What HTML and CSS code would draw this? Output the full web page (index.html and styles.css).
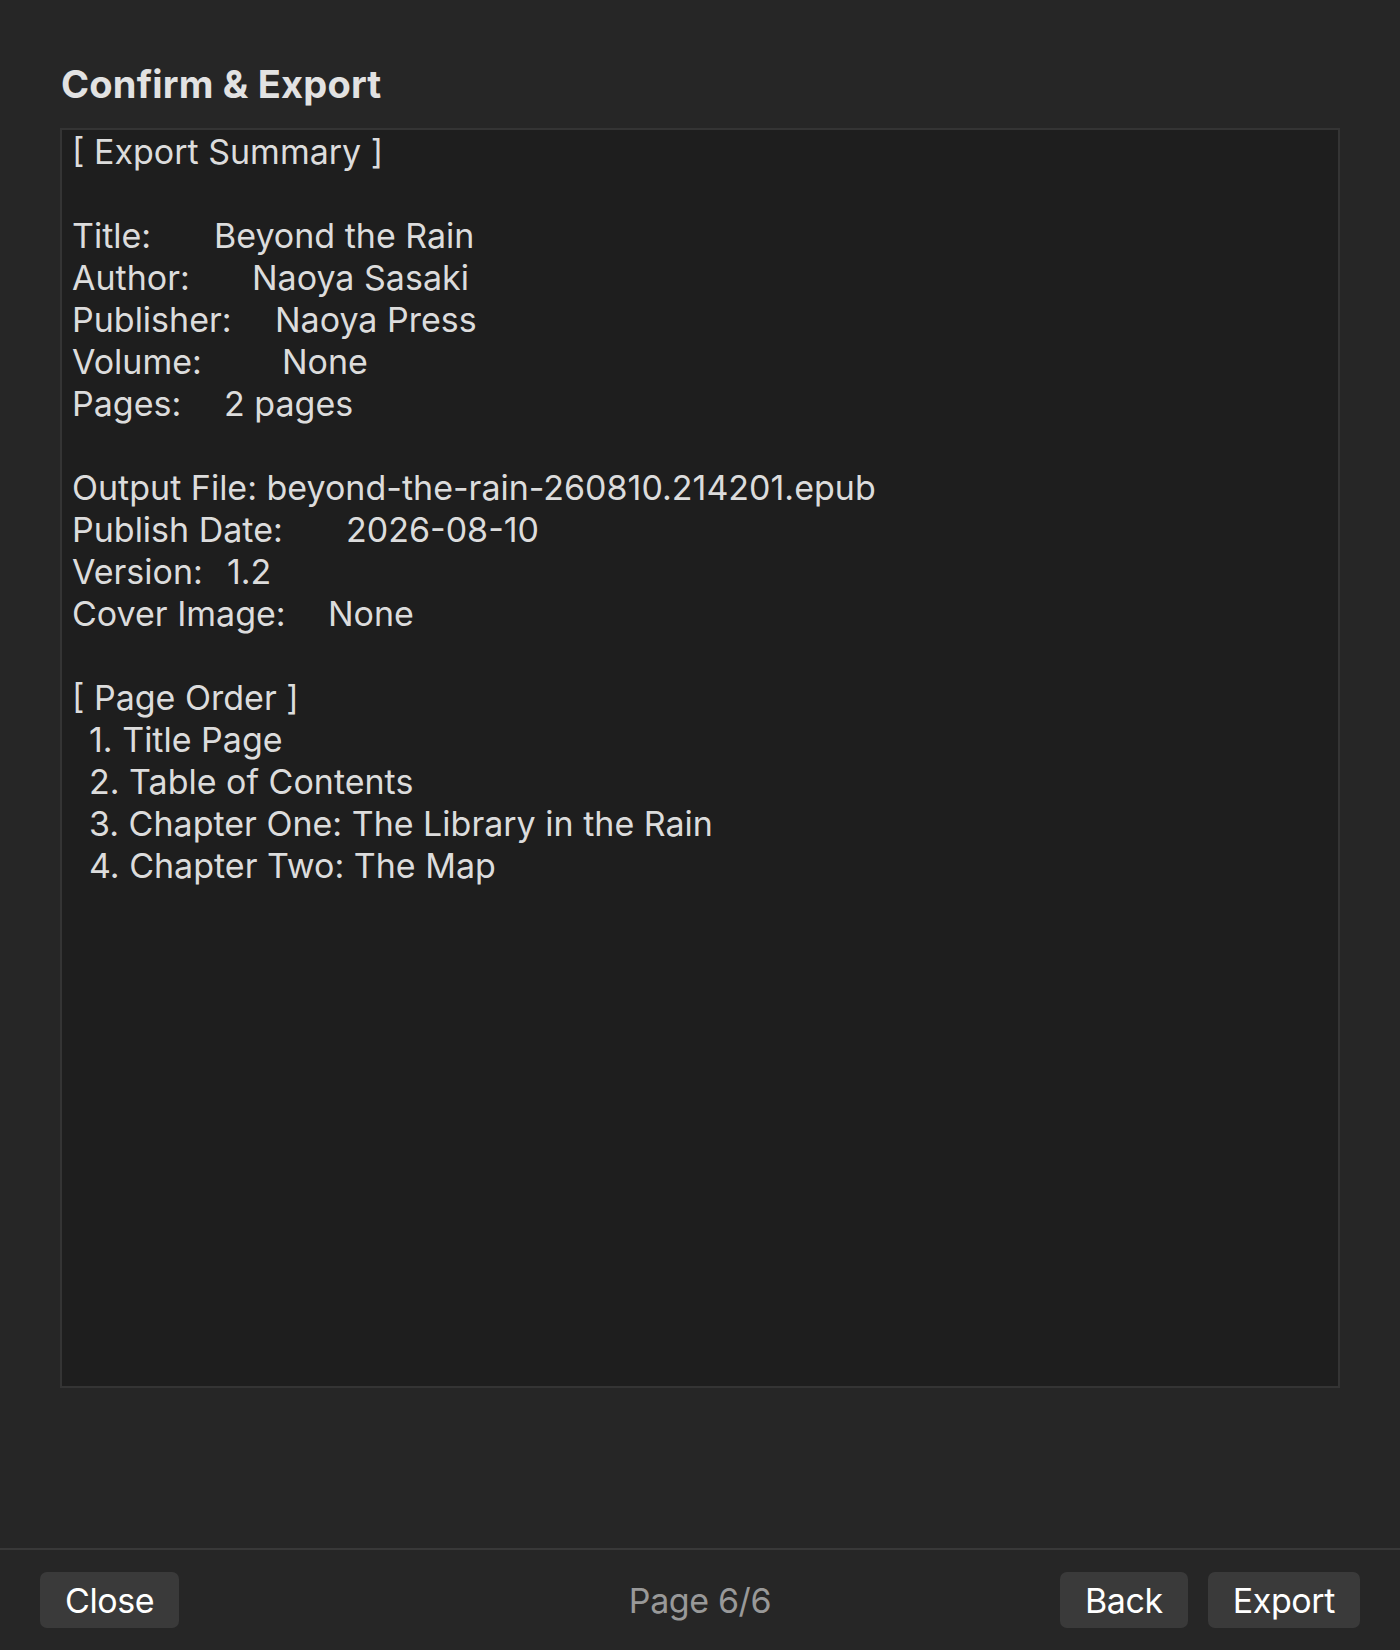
FILE: index.html
```html
<!DOCTYPE html>
<html lang="en">
<head>
<meta charset="utf-8">
<title>Confirm &amp; Export</title>
<link rel="stylesheet" href="styles.css">
</head>
<body>
<div class="page">
  <main class="content">
    <h1 class="heading">Confirm &amp; Export</h1>
    <div class="summary">
      <div class="line">[ Export Summary ]</div>
      <div class="line blank"></div>
      <div class="line"><span class="lbl w-title">Title:</span>Beyond the Rain</div>
      <div class="line"><span class="lbl w-author">Author:</span>Naoya Sasaki</div>
      <div class="line"><span class="lbl w-publisher">Publisher:</span>Naoya Press</div>
      <div class="line"><span class="lbl w-volume">Volume:</span>None</div>
      <div class="line"><span class="lbl w-pages">Pages:</span>2 pages</div>
      <div class="line blank"></div>
      <div class="line">Output File: beyond-the-rain-260810.214201.epub</div>
      <div class="line"><span class="lbl w-date">Publish Date:</span>2026-08-10</div>
      <div class="line"><span class="lbl w-version">Version:</span>1.2</div>
      <div class="line"><span class="lbl w-cover">Cover Image:</span>None</div>
      <div class="line blank"></div>
      <div class="line">[ Page Order ]</div>
      <div class="line item">1. Title Page</div>
      <div class="line item">2. Table of Contents</div>
      <div class="line item">3. Chapter One: The Library in the Rain</div>
      <div class="line item">4. Chapter Two: The Map</div>
    </div>
  </main>
  <footer class="footer">
    <button class="btn">Close</button>
    <span class="pager">Page 6/6</span>
    <div class="actions">
      <button class="btn">Back</button>
      <button class="btn">Export</button>
    </div>
  </footer>
</div>
</body>
</html>
```
FILE: styles.css
```css
* { box-sizing: border-box; }
html, body {
  margin: 0;
  padding: 0;
  background: #262626;
}
body {
  font-family: Inter, "Noto Sans", "Liberation Sans", sans-serif;
  color: #e0e0e0;
}
.page {
  width: 1400px;
  height: 1650px;
  display: flex;
  flex-direction: column;
}
.content {
  flex: 1;
  padding: 60px 60px 0 60px;
}
.heading {
  margin: 0 0 20px 1px;
  font-size: 38px;
  font-weight: 700;
  line-height: 48px;
  color: #e2e2e2;
  letter-spacing: 0.2px;
}
.summary {
  height: 1260px;
  background: #1e1e1e;
  border: 2px solid #343434;
  padding: 1px 10px 0 10px;
  font-size: 34px;
  line-height: 42px;
  color: #dcdcdc;
  letter-spacing: 0;
}
.line {
  height: 42px;
  white-space: nowrap;
}
.lbl { display: inline-block; }
.w-title { width: 142px; }
.w-author { width: 180px; }
.w-publisher { width: 203px; }
.w-volume { width: 210px; }
.w-pages { width: 152px; }
.w-date { width: 274px; }
.w-version { width: 155px; }
.w-cover { width: 256px; }
.item { padding-left: 17px; }
.footer {
  height: 102px;
  border-top: 2px solid #383838;
  display: flex;
  align-items: center;
  justify-content: space-between;
  padding: 0 40px;
  position: relative;
}
.btn {
  height: 56px;
  padding: 0 25px;
  background: #3a3a3a;
  color: #ffffff;
  border: none;
  border-radius: 7px;
  font-family: Inter, "Noto Sans", "Liberation Sans", sans-serif;
  font-size: 34px;
  letter-spacing: -0.4px;
}
.pager {
  position: absolute;
  left: 0;
  right: 0;
  text-align: center;
  font-size: 34px;
  color: #999999;
  letter-spacing: -0.4px;
  pointer-events: none;
}
.actions {
  display: flex;
  gap: 20px;
}
```
